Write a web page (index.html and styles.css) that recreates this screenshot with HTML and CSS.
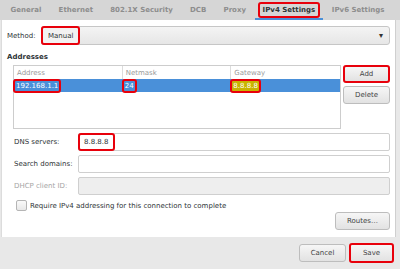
FILE: index.html
```html
<!DOCTYPE html>
<html lang="en">
<head>
  <meta charset="UTF-8" />
  <title>Editing Wired connection</title>
  <link rel="stylesheet" href="styles.css">
</head>
<body>
  <div class="tabs">
    <div class="tab">General</div>
    <div class="tab">Ethernet</div>
    <div class="tab">802.1X Security</div>
    <div class="tab">DCB</div>
    <div class="tab">Proxy</div>
    <div class="tab active"><span class="hl">IPv4 Settings</span></div>
    <div class="tab">IPv6 Settings</div>
  </div>

  <div class="page">
    <div class="row method">
      <span class="label">Method:</span>
      <div class="combo">
        <span class="hl combo-value">Manual</span>
        <span class="arrow">▾</span>
      </div>
    </div>

    <div class="section-title">Addresses</div>
    <div class="addresses">
      <div class="table">
        <div class="thead">
          <div class="cell">Address</div>
          <div class="cell">Netmask</div>
          <div class="cell">Gateway</div>
        </div>
        <div class="tr selected">
          <div class="cell"><span class="hl">192.168.1.1</span></div>
          <div class="cell"><span class="hl">24</span></div>
          <div class="cell"><span class="hl gw">8.8.8.8</span></div>
        </div>
      </div>
      <div class="side-buttons">
        <button class="btn hl-btn">Add</button>
        <button class="btn">Delete</button>
      </div>
    </div>

    <div class="fields">
      <div class="field">
        <span class="field-label">DNS servers:</span>
        <div class="input"><span class="hl">8.8.8.8</span></div>
      </div>
      <div class="field">
        <span class="field-label">Search domains:</span>
        <div class="input"></div>
      </div>
      <div class="field disabled">
        <span class="field-label">DHCP client ID:</span>
        <div class="input"></div>
      </div>
    </div>

    <label class="check">
      <span class="box"></span>
      Require IPv4 addressing for this connection to complete
    </label>

    <div class="routes-row">
      <button class="btn routes">Routes…</button>
    </div>
  </div>

  <div class="footer">
    <button class="btn">Cancel</button>
    <button class="btn hl-btn save">Save</button>
  </div>
</body>
</html>
```

FILE: styles.css
```css
body {
  margin: 0;
  width: 400px;
  height: 269px;
  overflow: hidden;
  background: #e8e8e8;
  font-family: "DejaVu Sans", sans-serif;
  font-size: 7px;
  color: #2e3436;
}

.hl {
  border: 2px solid #e8000b;
  border-radius: 3px;
}

/* tab strip */
.tabs {
  display: flex;
  height: 20px;
  padding-left: 2px;
  background: #d6d6d6;
}
.tab {
  display: flex;
  align-items: center;
  padding: 0 8.6px;
  font-weight: bold;
  color: #8d8d8d;
}
.tab.active {
  color: #2e3436;
  box-shadow: inset 0 -2px 0 #4a90d9;
  padding: 0 3px;
}
.tab.active .hl {
  padding: 2px 3px;
}

/* main page */
.page {
  width: 383px;
  height: 211px;
  margin-left: 1px;
  padding: 6px 5px 0 5px;
  background: #fff;
  border-right: 1px solid #cfcfcf;
  border-left: 1px solid #dcdcdc;
}

.row {
  display: flex;
  align-items: center;
}
.label {
  width: 34px;
}
.combo {
  flex: 1;
  display: flex;
  align-items: center;
  justify-content: space-between;
  height: 17px;
  border: 1px solid #c6c6c6;
  border-radius: 3px;
  background: linear-gradient(#f4f4f4, #e6e6e6);
}
.combo-value {
  display: flex;
  align-items: center;
  height: 15px;
  padding: 0 5px;
  margin-left: -1px;
  background: #f2f2f2;
}
.arrow {
  margin-right: 6px;
  font-size: 8px;
  color: #333;
}

.section-title {
  margin-top: 8px;
  font-weight: bold;
  line-height: 9px;
}

.addresses {
  display: flex;
  gap: 2px;
  margin: 3px 0 0 6px;
}
.table {
  width: 326px;
  height: 62px;
  border: 1px solid #cdcdcd;
  background: #fff;
}
.thead,
.tr {
  display: flex;
  height: 13px;
}
.thead {
  color: #9a9a9a;
}
.cell {
  display: flex;
  align-items: center;
  width: 110px;
  padding-left: 3px;
  box-sizing: border-box;
  border-right: 1px solid #dcdcdc;
}
.cell:last-child {
  border-right: none;
}
.tr.selected {
  background: #4a90d9;
  color: #fff;
}
.tr.selected .cell {
  border-right-color: #4a90d9;
  padding-left: 0;
}
.tr .hl {
  padding: 1px;
  margin-left: -1px;
}
.tr .gw {
  background: #c8b400;
}

.side-buttons {
  display: flex;
  flex-direction: column;
  gap: 3px;
  width: 47px;
}

.btn {
  height: 18px;
  padding: 0 8px;
  border: 1px solid #bdbdbd;
  border-radius: 3px;
  background: linear-gradient(#f6f6f6, #e2e2e2);
  font-family: inherit;
  font-size: 7px;
  color: #444;
}
.btn.hl-btn {
  border: 2px solid #e8000b;
}

.fields {
  display: flex;
  flex-direction: column;
  gap: 4px;
  margin: 4px 0 0 7px;
}
.field {
  display: flex;
  align-items: center;
}
.field-label {
  width: 64px;
}
.input {
  flex: 1;
  display: flex;
  align-items: center;
  height: 16px;
  border: 1px solid #cfcfcf;
  border-radius: 2px;
  background: #fff;
}
.input .hl {
  padding: 3px 4px;
  margin-left: -1px;
  color: #2e3436;
}
.field.disabled {
  color: #a5a5a5;
}
.field.disabled .input {
  background: #eeeeee;
}

.check {
  display: flex;
  align-items: center;
  gap: 3px;
  margin: 5px 0 0 9px;
}
.box {
  width: 9px;
  height: 9px;
  border: 1px solid #b5b5b5;
  border-radius: 2px;
  background: linear-gradient(#fafafa, #e8e8e8);
}

.routes-row {
  display: flex;
  justify-content: flex-end;
  margin-top: 1px;
}
.routes {
  width: 55px;
}

.footer {
  display: flex;
  justify-content: flex-end;
  gap: 3px;
  padding: 7px 6px 0 0;
}
.footer .btn {
  width: 47px;
}
.footer .save {
  width: 45px;
  height: 20px;
  margin-top: -1px;
}
```
